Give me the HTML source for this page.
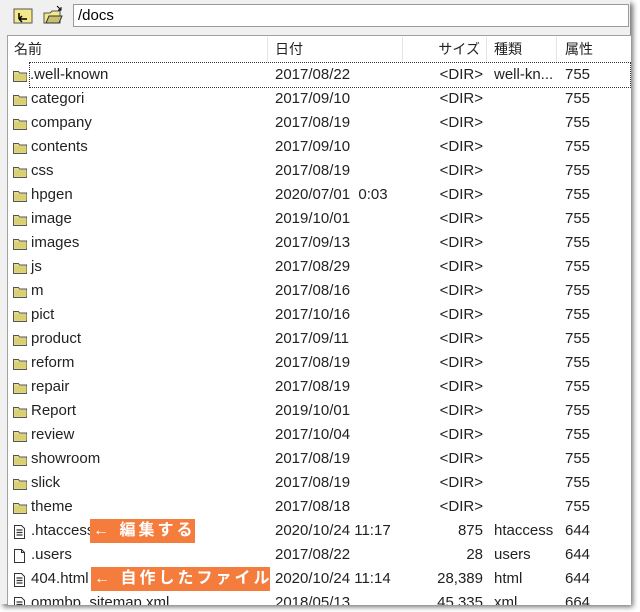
<!DOCTYPE html><html><head><meta charset="utf-8"><style>
body{margin:0;width:640px;height:612px;background:#fff;position:relative;overflow:hidden;font-family:"Liberation Sans","Noto Sans CJK JP",sans-serif;font-size:15px;color:#000}
.win{position:absolute;left:0;top:0;width:630px;height:604px;background:#f0f0f0;box-shadow:3px 3px 5px rgba(0,0,0,.55)}
.addr{position:absolute;left:73px;top:4px;width:556px;height:23px;background:#fff;border:1px solid #999;box-sizing:border-box;font-size:15px;line-height:21px;padding-left:4px}
.tb{position:absolute;top:5px;width:20px;height:20px}
.panel{position:absolute;left:7px;top:35px;width:623px;height:569px;background:#fff;border-left:1px solid #a0a0a0;border-top:1px solid #a0a0a0;overflow:hidden}
.hd{position:absolute;left:0;top:1px;width:623px;height:25px;font-size:14px;line-height:25px;color:#222}
.hd div{position:absolute;top:0;height:25px;border-right:1px solid #e5e5e5}
.row{position:absolute;left:0;width:623px;height:24px;line-height:24px;color:#222}
.row span{position:absolute;top:0;white-space:nowrap}
.n{left:23px}.d{left:267px}.s{right:148px;text-align:right}.t{left:486px}.a{left:557px}
.ic{position:absolute;left:5px;top:5px}
.lab{position:absolute;background:#f47c3c;color:#fff;height:24px;line-height:24px;font-size:16px;font-weight:bold;padding:0 3px;letter-spacing:3px;white-space:nowrap}
</style></head><body>
<div class="win">
<svg class="tb" style="left:13px" viewBox="0 0 20 20"><rect x="1" y="4" width="18" height="14" fill="#f3e98a" stroke="#555"/><path d="M6 14h8M6 14l3-3M6 14l3 3M6 14V8" stroke="#000" fill="none" stroke-width="1.5"/></svg>
<svg class="tb" style="left:43px" viewBox="0 0 20 20"><path d="M1 8h6l2-2h8v12H1z" fill="#f3e98a" stroke="#555"/><path d="M3 18l3-7h13l-3 7z" fill="#c8c070" stroke="#333"/><path d="M14 1l4 4M18 2v3h-3" stroke="#000" fill="none"/></svg>
<div class="addr">/docs</div>
<div class="panel">
<div class="hd"><div style="left:0;width:260px;padding-left:6px;box-sizing:border-box">名前</div><div style="left:261px;width:134px;padding-left:6px;box-sizing:border-box">日付</div><div style="left:396px;width:83px;text-align:right;padding-right:6px;box-sizing:border-box">サイズ</div><div style="left:480px;width:69px;padding-left:6px;box-sizing:border-box">種類</div><div style="left:550px;width:73px;padding-left:7px;box-sizing:border-box;border:none">属性</div></div>
<div id="rows"></div>
</div>
<div class="lab" style="left:90px;top:519px;width:99px">← 編集する</div>
<div class="lab" style="left:91px;top:567px;width:173px">← 自作したファイル</div>
</div>
<script>
var F='<svg class="ic" width="15" height="12" viewBox="0 0 15 12" style="top:7px"><path d="M.5 1.5h5l1 1.5h7v8.5H.5z" fill="#e8dc8c" stroke="#555"/><path d="M1.5 4h12v6.5h-12z" fill="#d9cf73"/></svg>';
var D='<svg class="ic" width="12" height="14" viewBox="0 0 12 14" style="left:6px;top:6px"><path d="M.5.5h7l3 3v10H.5z" fill="#fff" stroke="#333"/><path d="M2.5 5h6M2.5 7.5h6M2.5 10h6" stroke="#333" stroke-width="1.2"/></svg>';
var E='<svg class="ic" width="12" height="14" viewBox="0 0 12 14" style="left:6px;top:6px"><path d="M.5.5h7l3 3v10H.5z" fill="#fff" stroke="#333"/><path d="M7.5.5v3h3" fill="none" stroke="#333"/></svg>';
var r=[[".well-known","2017/08/22","<DIR>","well-kn...","755"],["categori","2017/09/10"],["company","2017/08/19"],["contents","2017/09/10"],["css","2017/08/19"],["hpgen","2020/07/01&nbsp;&nbsp;0:03"],["image","2019/10/01"],["images","2017/09/13"],["js","2017/08/29"],["m","2017/08/16"],["pict","2017/10/16"],["product","2017/09/11"],["reform","2017/08/19"],["repair","2017/08/19"],["Report","2019/10/01"],["review","2017/10/04"],["showroom","2017/08/19"],["slick","2017/08/19"],["theme","2017/08/18"],
[".htaccess","2020/10/24 11:17","875","htaccess","644",D],[".users","2017/08/22","28","users","644",E],["404.html","2020/10/24 11:14","28,389","html","644",D],["ommbp_sitemap.xml","2018/05/13","45,335","xml","664",D]];
var h='';r.forEach(function(x,i){var ic=x[5]||F;h+='<div class="row" style="top:'+(27+i*24)+'px">'+ic+'<span class="n"'+(i==0?' style="outline:1px dotted #333;outline-offset:0;left:22px;width:600px"':'')+'>'+x[0]+'</span><span class="d">'+x[1]+'</span><span class="s">'+(x[2]||'&lt;DIR&gt;').replace('<DIR>','&lt;DIR&gt;')+'</span><span class="t">'+(x[3]||'')+'</span><span class="a">'+(x[4]||'755')+'</span></div>';});
document.getElementById('rows').innerHTML=h;
</script>
</body></html>
